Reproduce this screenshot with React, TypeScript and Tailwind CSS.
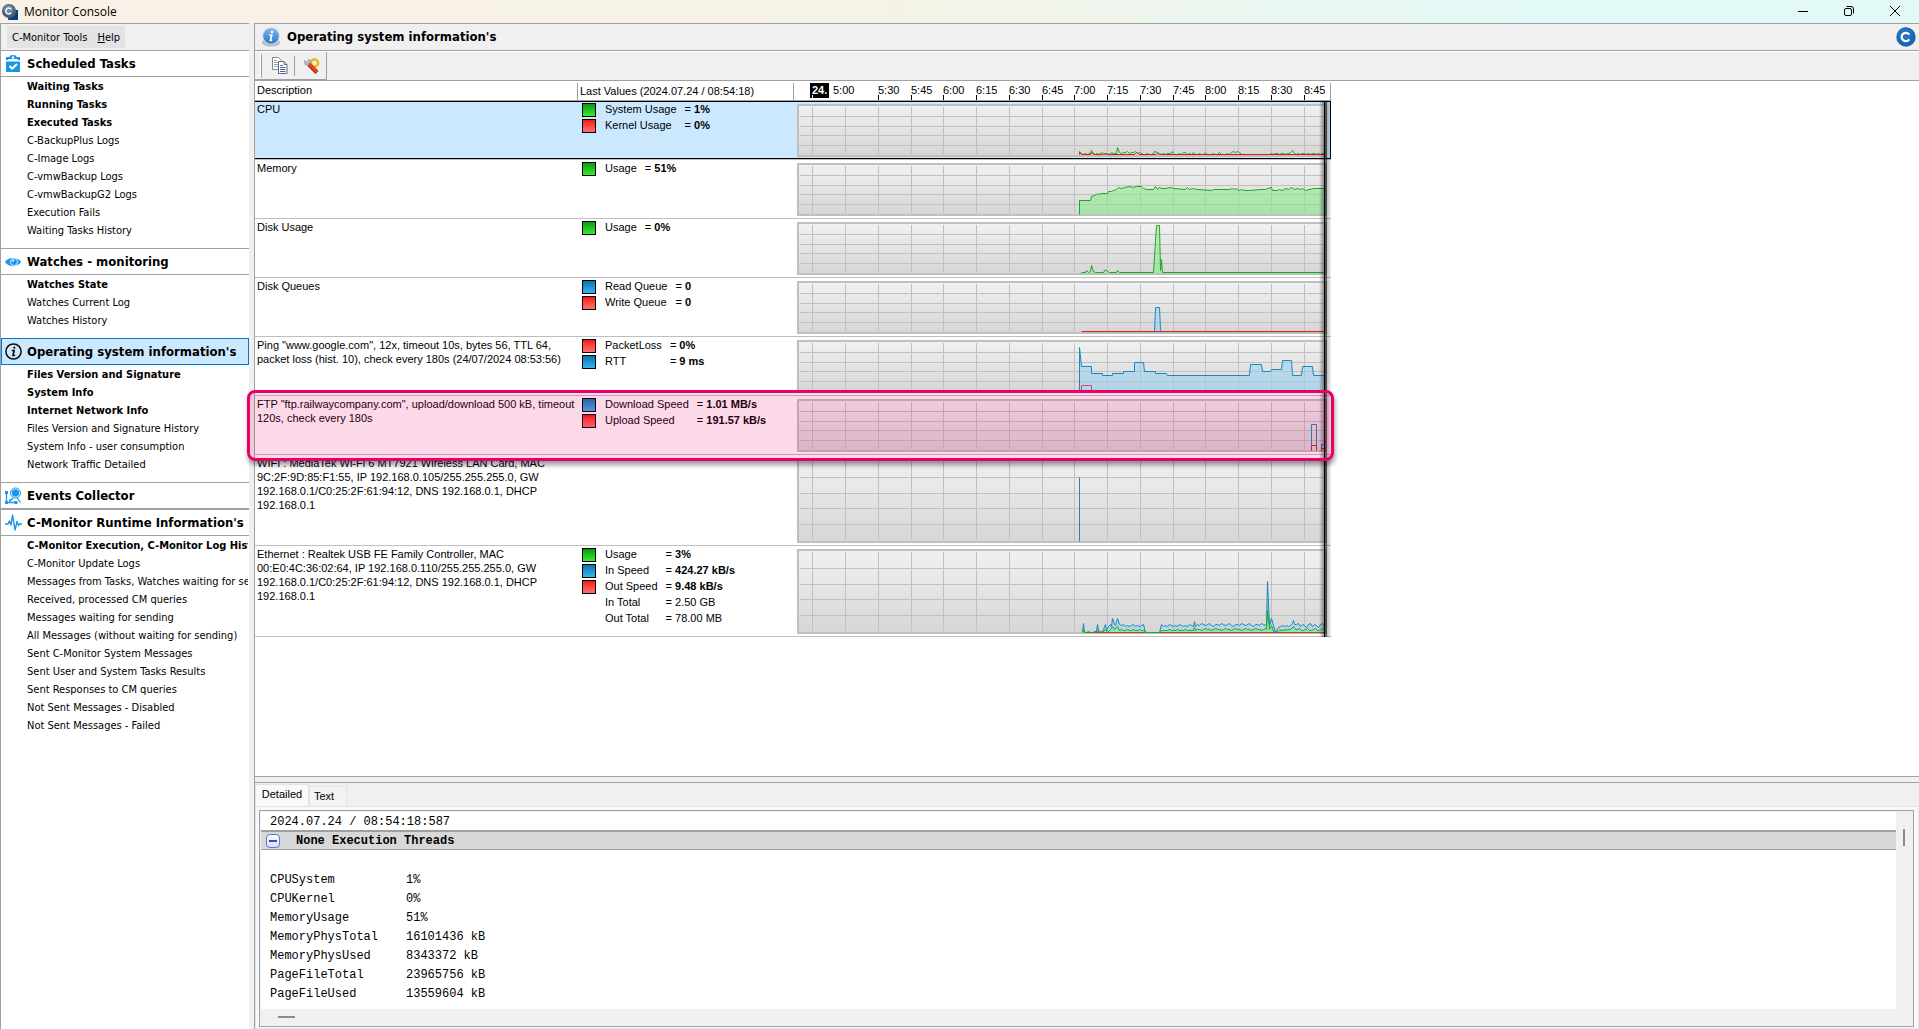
import { useState, type ReactNode } from "react";
import clsx from "clsx";

type Tone = "green" | "red" | "blue" | "none";

type Metric = { label: string; value: string; tone: Tone; plain?: boolean };

type Series = { points: string; stroke: string; fill?: string };

type Monitor = {
  id: string;
  description: string;
  metrics: Metric[];
  series: Series[];
  tall?: boolean;
  marked?: boolean;
};

type MenuGroup = {
  title: string;
  icon: ReactNode;
  strong: string[];
  items: string[];
};

const GREEN = "#1fa81f";
const RED = "#e8180c";
const BLUE = "#1c86bd";

// repeats a pattern of levels every two pixels
function wave(from: number, to: number, levels: number[]) {
  const out: string[] = [];
  for (let x = from, i = 0; x <= to; x += 2, i++) out.push(`${x},${levels[i % levels.length]}`);
  return out.join(" ");
}

const cpuLine = [
  "286,50 286,47 288,49",
  wave(290, 296, [50, 49]),
  "297,49 298,46 300,49",
  wave(302, 320, [50, 49, 50, 48, 49]),
  "323,49 324,43 326,48",
  wave(328, 346, [49, 48, 48, 47]),
  wave(348, 360, [49, 50, 50]),
  "361,47 364,48",
  wave(366, 374, [49, 50]),
  "377,49 379,47 380,50",
  wave(384, 400, [50, 49, 50, 48, 48]),
  wave(402, 436, [50, 50, 49, 50, 50, 48, 50]),
  wave(438, 446, [48, 47]),
  wave(448, 476, [50]),
  wave(478, 494, [49, 50, 49]),
  "496,49 498,47 499,46 501,49",
  wave(503, 531, [50, 49, 50, 49, 49])
].join(" ");

const memoryLine =
  "286,51 286,37 297,37 298,33 301,32 303,31 304,30 306,31 308,30 312,30 314,30 315,28 318,28 320,27 323,26 325,24 328,25 331,24 336,23 340,24 343,23 348,23 350,25 353,26 360,26 362,23 364,26 366,24 368,25 372,25 377,24 380,25 392,26 394,24 396,26 399,25 404,26 418,27 420,26 436,26 439,25 441,26 443,25 445,27 448,26 451,27 456,27 467,26 472,26 474,25 478,24 479,27 484,27 486,26 489,27 492,25 495,26 498,24 501,26 504,25 507,26 509,25 512,27 520,25 531,25";

const inSpeedLine = [
  "289,83 290,74 291,83",
  wave(293, 301, [83, 82, 83]),
  "303,82 304,75 305,81 307,82 309,83 310,80 312,75 313,81 315,77 317,75 318,77 319,69 321,75 322,76 324,69 326,75",
  wave(328, 350, [76, 75, 77, 76, 77]),
  "352,83 366,83 368,75",
  wave(370, 398, [77, 76, 77, 75, 76]),
  "400,77 401,72 402,77",
  wave(404, 472, [75, 76, 74, 75, 76, 75, 74, 76, 77, 75]),
  "473,74 474,32 476,76 478,69 480,76 482,83 485,78",
  wave(487, 497, [77, 76]),
  "499,74 500,71 501,75",
  wave(503, 531, [75, 74, 77, 75, 76, 78])
].join(" ");

const usageLine = [
  "289,83 290,80 291,83 303,83 304,81 306,83 310,82 312,80 314,83 317,80 319,77 321,80 324,77 326,81",
  wave(328, 350, [80, 81, 81]),
  "352,83 366,83 368,81",
  wave(370, 398, [81, 81, 81, 80]),
  "400,81 401,78 402,81",
  wave(404, 472, [80, 80, 81, 80, 79]),
  "473,80 474,61 476,80 478,76 480,82 483,83 486,81 497,80 500,77 502,80",
  wave(504, 531, [80, 79, 81, 81])
].join(" ");

const MONITORS: Monitor[] = [
  {
    id: "cpu",
    description: "CPU",
    metrics: [
      { label: "System Usage", value: "1%", tone: "green" },
      { label: "Kernel Usage", value: "0%", tone: "red" }
    ],
    series: [
      { points: cpuLine, stroke: GREEN },
      { points: "286,50 286,48 288,50 297,50 298,48 300,50 308,50 312,49 314,50 341,50 343,48 346,50 362,50 364,49 366,50 531,50", stroke: RED }
    ]
  },
  {
    id: "memory",
    description: "Memory",
    metrics: [{ label: "Usage", value: "51%", tone: "green" }],
    series: [{ points: memoryLine, stroke: GREEN, fill: "#7fee7f" }]
  },
  {
    id: "disk-usage",
    description: "Disk Usage",
    metrics: [{ label: "Usage", value: "0%", tone: "green" }],
    series: [
      {
        points: "288,50 292,50 293,48 295,50 297,49 298,43 300,49 302,50 310,50 312,47 314,49 316,50 323,50 324,48 326,50 360,50 363,3 366,3 367,48 368,37 369,50 531,50",
        stroke: GREEN,
        fill: "#7fee7f"
      }
    ]
  },
  {
    id: "disk-queues",
    description: "Disk Queues",
    metrics: [
      { label: "Read Queue", value: "0", tone: "blue" },
      { label: "Write Queue", value: "0", tone: "red" }
    ],
    series: [
      { points: "361,50 362,26 366,26 367,48 368,50", stroke: BLUE, fill: "#8fd2f5" },
      { points: "288,50 531,50", stroke: RED }
    ]
  },
  {
    id: "ping",
    description: 'Ping "www.google.com", 12x, timeout 10s, bytes 56, TTL 64,\npacket loss (hist. 10), check every 180s (24/07/2024 08:53:56)',
    metrics: [
      { label: "PacketLoss", value: "0%", tone: "red" },
      { label: "RTT", value: "9 ms", tone: "blue" }
    ],
    series: [
      {
        points:
          "286,51 286,7 288,26 298,26 298,33 309,33 309,35 319,35 319,33 330,33 330,31 341,31 341,22 350,22 351,31 362,31 362,33 373,33 374,35 456,35 457,24 468,24 469,31 477,31 478,29 488,29 489,20 498,20 499,35 508,35 509,26 519,26 520,35 531,35",
        stroke: BLUE,
        fill: "#8fd2f5"
      },
      { points: "288,51 288,45 298,45 298,51", stroke: "#d8485c" }
    ]
  },
  {
    id: "ftp",
    description: 'FTP "ftp.railwaycompany.com", upload/download 500 kB, timeout\n120s, check every 180s',
    metrics: [
      { label: "Download Speed", value: "1.01 MB/s", tone: "blue" },
      { label: "Upload Speed", value: "191.57 kB/s", tone: "red" }
    ],
    series: [
      { points: "518,51 518,25 523,25 523,51", stroke: BLUE },
      { points: "528,51 528,45 531,45", stroke: BLUE },
      { points: "518,51 518,46 523,46 523,51", stroke: RED },
      { points: "528,51 528,49 531,49", stroke: RED }
    ],
    marked: true
  },
  {
    id: "wifi",
    description: "WIFI : MediaTek Wi-Fi 6 MT7921 Wireless LAN Card, MAC\n9C:2F:9D:85:F1:55, IP 192.168.0.105/255.255.255.0, GW\n192.168.0.1/C0:25:2F:61:94:12, DNS 192.168.0.1, DHCP\n192.168.0.1",
    metrics: [],
    series: [{ points: "286,83 286,19", stroke: BLUE }],
    tall: true
  },
  {
    id: "ethernet",
    description: "Ethernet : Realtek USB FE Family Controller, MAC\n00:E0:4C:36:02:64, IP 192.168.0.110/255.255.255.0, GW\n192.168.0.1/C0:25:2F:61:94:12, DNS 192.168.0.1, DHCP\n192.168.0.1",
    metrics: [
      { label: "Usage", value: "3%", tone: "green" },
      { label: "In Speed", value: "424.27 kB/s", tone: "blue" },
      { label: "Out Speed", value: "9.48 kB/s", tone: "red" },
      { label: "In Total", value: "2.50 GB", tone: "none", plain: true },
      { label: "Out Total", value: "78.00 MB", tone: "none", plain: true }
    ],
    series: [
      { points: inSpeedLine, stroke: BLUE, fill: "#8fd2f5" },
      { points: usageLine, stroke: GREEN, fill: "#7fee7f" },
      { points: "298,83 351,83", stroke: "#b8442c" },
      { points: "351,83 366,83", stroke: GREEN },
      { points: "366,83 531,83", stroke: "#b8442c" }
    ],
    tall: true
  }
];

const TICKS: [number, string][] = [
  [85, "5:30"], [118, "5:45"], [150, "6:00"], [183, "6:15"], [216, "6:30"], [249, "6:45"], [281, "7:00"],
  [314, "7:15"], [347, "7:30"], [380, "7:45"], [412, "8:00"], [445, "8:15"], [478, "8:30"], [511, "8:45"]
];
const GRID_X = [19, 52, ...TICKS.map(([x]) => x)];

const GROUPS: MenuGroup[] = [
  {
    title: "Scheduled Tasks",
    icon: <ClipboardIcon />,
    strong: ["Waiting Tasks", "Running Tasks", "Executed Tasks"],
    items: ["C-BackupPlus Logs", "C-Image Logs", "C-vmwBackup Logs", "C-vmwBackupG2 Logs", "Execution Fails", "Waiting Tasks History"]
  },
  {
    title: "Watches - monitoring",
    icon: <EyeIcon />,
    strong: ["Watches State"],
    items: ["Watches Current Log", "Watches History"]
  },
  {
    title: "Operating system information's",
    icon: <InfoIcon />,
    strong: ["Files Version and Signature", "System Info", "Internet Network Info"],
    items: ["Files Version and Signature History", "System Info - user consumption", "Network Traffic Detailed"]
  },
  { title: "Events Collector", icon: <EventsIcon />, strong: [], items: [] },
  {
    title: "C-Monitor Runtime Information's",
    icon: <PulseIcon />,
    strong: ["C-Monitor Execution, C-Monitor Log History"],
    items: [
      "C-Monitor Update Logs",
      "Messages from Tasks, Watches waiting for sending",
      "Received, processed CM queries",
      "Messages waiting for sending",
      "All Messages (without waiting for sending)",
      "Sent C-Monitor System Messages",
      "Sent User and System Tasks Results",
      "Sent Responses to CM queries",
      "Not Sent Messages - Disabled",
      "Not Sent Messages - Failed"
    ]
  }
];

const DETAILS = [
  ["CPUSystem", "1%"],
  ["CPUKernel", "0%"],
  ["MemoryUsage", "51%"],
  ["MemoryPhysTotal", "16101436 kB"],
  ["MemoryPhysUsed", "8343372 kB"],
  ["PageFileTotal", "23965756 kB"],
  ["PageFileUsed", "13559604 kB"]
];

function ClipboardIcon() {
  return (
    <svg width="16" height="18" viewBox="0 0 16 18" aria-hidden="true">
      <path d="M1 2h3.500a3.500 2 0 0 1 7 0H15v3H1z" fill="#1796ea" />
      <circle cx="8" cy="2.500" r="1.200" fill="#fff" />
      <path d="M3.500 4.500h9" stroke="#fff" />
      <path d="M1 6.500h14V17H1z" fill="#1796ea" />
      <path d="M4.500 11l2.700 2.700L12 9" fill="none" stroke="#fff" strokeWidth="2" />
    </svg>
  );
}

function EyeIcon() {
  return (
    <svg width="16" height="12" viewBox="0 0 16 12" aria-hidden="true">
      <path d="M0 6C3 .5 13 .5 16 6 13 11.500 3 11.500 0 6z" fill="#1796ea" />
      <circle cx="9" cy="6" r="3.700" fill="#fff" />
      <circle cx="9" cy="6" r="2.900" fill="#1796ea" />
      <path d="M9 5.500V3.400A2.600 2.600 0 0 0 6.800 5.500z" fill="#fff" />
    </svg>
  );
}

function InfoIcon() {
  return (
    <svg width="17" height="17" viewBox="0 0 17 17" fill="none" stroke="#111" aria-hidden="true">
      <circle cx="8.500" cy="8.500" r="7.600" strokeWidth="1.500" />
      <circle cx="9.300" cy="4.700" r="1.100" fill="#111" stroke="none" />
      <path d="M6.700 7.500h2.400L8 12.500h2.200" strokeWidth="1.700" />
    </svg>
  );
}

function EventsIcon() {
  return (
    <svg width="17" height="17" viewBox="0 0 17 17" fill="none" stroke="#1796ea" aria-hidden="true">
      <path d="M1.500 5v10M2 15.500h10M5 14l3-3M12 10.500l3.500 5" strokeWidth="1.300" />
      <circle cx="10.500" cy="6" r="5" strokeWidth="1" />
      <circle cx="10.500" cy="6" r="3.700" fill="#1796ea" stroke="none" />
      <path d="M0 4h3v3H0zM0 14h3v3H0zM9.500 14h3v3h-3zM4 12.500h2v2H4z" fill="#1796ea" stroke="none" />
    </svg>
  );
}

function PulseIcon() {
  return (
    <svg width="17" height="17" viewBox="0 0 17 17" fill="none" stroke="#1796ea" strokeWidth="1.400" strokeLinejoin="round" aria-hidden="true">
      <path d="M0 10h3l1.500-3 1.500 4L7.500 1l2.500 15 2-8.500 1.500 4 1-1.500H17" />
    </svg>
  );
}

function AppIcon() {
  return (
    <svg width="16" height="16" viewBox="0 0 16 16" className="shrink-0" aria-hidden="true">
      <path d="M7 6h9v10H6z" fill="#0a3f86" />
      <circle cx="7" cy="7" r="7" fill="#4a6079" />
      <circle cx="6.500" cy="5.500" r="4.800" fill="#6e859d" />
      <path d="M9.200 5.200A3 3 0 1 0 9.200 8.800" fill="none" stroke="#fff" strokeWidth="1.500" />
    </svg>
  );
}

function InfoBall() {
  return (
    <svg width="20" height="20" viewBox="0 0 20 20" aria-hidden="true">
      <defs>
        <linearGradient id="ball" x1="0" y1="0" x2="0" y2="1">
          <stop offset="0" stopColor="#7fb9ee" />
          <stop offset="1" stopColor="#2a74cb" />
        </linearGradient>
      </defs>
      <ellipse cx="10" cy="15.500" rx="9" ry="4" fill="#b4b6ba" />
      <circle cx="10" cy="9" r="9" fill="#d9dbe0" />
      <circle cx="10" cy="9" r="7.800" fill="url(#ball)" />
      <circle cx="11" cy="5" r="1.300" fill="#fff" />
      <path d="M8.300 8h2.400l-1.200 5.300h1.700" fill="none" stroke="#fff" strokeWidth="1.700" />
    </svg>
  );
}

function BrandBall() {
  return (
    <svg width="20" height="20" viewBox="0 0 20 20" aria-hidden="true">
      <circle cx="10" cy="10" r="9.700" fill="#1667b5" />
      <circle cx="9" cy="7.500" r="7" fill="#2473c2" />
      <path d="M13.300 7.600A4.200 4.200 0 1 0 13.300 12.400" fill="none" stroke="#fff" strokeWidth="2.200" />
    </svg>
  );
}

function CopyIcon() {
  return (
    <svg width="16" height="17" viewBox="0 0 16 17" aria-hidden="true">
      <path d="M.5.5h6l3 3v9h-9z" fill="#fff" stroke="#8a8a8a" />
      <path d="M2 3.500h3M2 5.500h4M2 7.500h4M2 9.500h4" stroke="#8fa6cc" />
      <path d="M6.500 4.500h5.500l3 3v9H6.500z" fill="#fff" stroke="#6c6c6c" />
      <path d="M12 4.500v3h3" fill="none" stroke="#6c6c6c" />
      <path d="M8 8.500h3M8 10.500h5.500M8 12.500h5.500M8 14.500h5.500" stroke="#3e67b0" />
    </svg>
  );
}

function ToolsIcon() {
  return (
    <svg width="17" height="16" viewBox="0 0 17 16" fill="none" aria-hidden="true">
      <circle cx="11.500" cy="5" r="3.600" stroke="#f5b81c" strokeWidth="2.600" />
      <path d="M1 2l2 2 2-.5L5.500 1 8 3l-.5 3.500L5.500 8 2 6.500z" fill="#b9bcc0" stroke="#8d9094" strokeWidth=".6" />
      <path d="M6 6.500l8 8" stroke="#a31208" strokeWidth="4" />
      <path d="M6 6l8 8" stroke="#ef4426" strokeWidth="2.600" />
    </svg>
  );
}

function Swatch({ tone }: { tone: Tone }) {
  if (tone === "none") return <span className="h-3.5" />;
  return (
    <span
      className={clsx(
        "h-3.5 w-3.5 border border-black bg-linear-to-b",
        tone === "green" && "from-[#0a9a0a] to-[#33ee33]",
        tone === "red" && "from-[#fb0505] to-[#ff6b6b]",
        tone === "blue" && "from-[#0874ac] to-[#36b4f4]"
      )}
    />
  );
}

function Chart({ series, tall }: { series: Series[]; tall?: boolean }) {
  const height = tall ? 85 : 53;
  const lines = tall ? [19, 35, 50, 66] : [12, 22, 31, 41];
  return (
    <svg width="538" height={height} viewBox={`0 0 538 ${height}`} className="block" aria-hidden="true">
      <defs>
        <linearGradient id={`plot${height}`} x1="0" y1="0" x2="0" y2="1">
          <stop offset="0" stopColor="#f1f1f1" />
          <stop offset="1" stopColor="#d6d6d6" />
        </linearGradient>
      </defs>
      <rect x="5" y="1" width="528" height={height - 2} fill={`url(#plot${height})`} stroke="#bfbfbf" strokeWidth="2" />
      <g stroke="#c0c0c0" shapeRendering="crispEdges">
        {lines.map((y) => <line key={y} x1="7" x2="531" y1={y + 0.5} y2={y + 0.5} />)}
        {GRID_X.map((x) => <line key={x} x1={x + 0.5} x2={x + 0.5} y1="3" y2={height - 3} />)}
      </g>
      {series.map((item) => (
        <g key={item.points} transform="translate(.5 .5)">
          {item.fill ? <polygon points={`${item.points} 531,${height - 2} ${item.points.split(",")[0]},${height - 2}`} fill={item.fill} fillOpacity=".5" /> : null}
          <polyline points={item.points} fill="none" stroke={item.stroke} />
        </g>
      ))}
    </svg>
  );
}

function TimeAxis() {
  return (
    <svg width="538" height="19" viewBox="0 0 538 19" className="block font-['Liberation_Sans',Arial,sans-serif] text-[11px] font-normal">
      <rect x="17" y="2" width="19" height="15" />
      <text x="19" y="13" fill="#fff" fontWeight="bold">24.</text>
      <path d="M19.500 14v5" stroke="#fff" />
      <text x="40" y="13">5:00</text>
      {TICKS.map(([x, label]) => (
        <g key={label}>
          <text x={x} y="13">{label}</text>
          <path d={`M${x + 0.5} 14v5`} stroke="#000" />
        </g>
      ))}
      <path d="M.5 2v17M537.500 2v17" stroke="#a0a0a0" />
    </svg>
  );
}

function MonitorRow({ monitor, selected, onSelect }: { monitor: Monitor; selected: boolean; onSelect: () => void }) {
  const cell = clsx(
    "border-y",
    monitor.tall ? "h-[90px]" : "h-[58px]",
    selected ? "border-black bg-[#cce8ff]" : "border-transparent"
  );
  return (
    <tr onClick={onSelect} className="align-top">
      <td className="relative border-b border-[#bfbfbf] p-0">
        <div className={clsx(cell, "pl-0.5 leading-[14px] whitespace-pre")}>{monitor.description}</div>
        {monitor.marked ? (
          <div className="pointer-events-none absolute -top-1.5 -left-2 z-20 h-[71px] w-[1087px] rounded-lg border-3 border-[#e6006a] bg-[#e6006a]/15 shadow-[1px_4px_5px_rgba(0,0,0,0.4)]" />
        ) : null}
      </td>
      <td className="border-b border-[#bfbfbf] p-0">
        <div className={cell}>
          <div className="grid grid-cols-[15px_max-content_max-content] gap-x-2 gap-y-0.5 pt-px pl-[5px] leading-3">
            {monitor.metrics.map((metric) => (
              <div key={metric.label} className="contents">
                <Swatch tone={metric.tone} />
                <span>{metric.label}</span>
                <span>= {metric.plain ? metric.value : <b>{metric.value}</b>}</span>
              </div>
            ))}
          </div>
        </div>
      </td>
      <td className="border-b border-[#bfbfbf] p-0">
        <div className={clsx(cell, "pt-0.5", selected && "border-r")}>
          <Chart series={monitor.series} tall={monitor.tall} />
        </div>
      </td>
    </tr>
  );
}

function Sidebar() {
  const [active, setActive] = useState("Operating system information's");
  return (
    <aside className="flex w-[249px] shrink-0 flex-col overflow-hidden border-t border-l border-[#a0a0a0] bg-white">
      <div className="flex h-[27px] shrink-0 items-center border-b border-[#a0a0a0] bg-[#f0f0f0] pl-1.5">
        <div className="flex h-[22px] items-center gap-2.5 bg-[#e3e3e3] px-[5px] pt-0.5">
          <button type="button">C-Monitor Tools</button>
          <button type="button"><u>H</u>elp</button>
        </div>
      </div>
      <nav>
        {GROUPS.map((group, index) => {
          const isActive = group.title === active;
          const hasItems = group.strong.length + group.items.length > 0;
          return (
            <section key={group.title} className={clsx(hasItems && index < 4 && "pb-2")}>
              <button
                type="button"
                onClick={() => setActive(group.title)}
                className={clsx(
                  "flex w-full items-center text-left text-[13px] font-bold whitespace-nowrap",
                  isActive ? "h-[27px] border border-[#0078d7] bg-[#cce8ff]" : "border-b border-[#a0a0a0]",
                  !isActive && (index === 0 ? "h-[26px]" : "h-[27px] border-t")
                )}
              >
                <span className={clsx("flex shrink-0", isActive ? "w-[25px] pl-[3px]" : "w-[26px] pl-1")}>{group.icon}</span>
                {group.title}
              </button>
              {hasItems ? (
                <ul className="mr-px overflow-hidden pt-px pl-[26px] leading-[18px] whitespace-nowrap">
                  {group.strong.map((label) => (
                    <li key={label}><button type="button" className="font-bold">{label}</button></li>
                  ))}
                  {group.items.map((label) => (
                    <li key={label}><button type="button">{label}</button></li>
                  ))}
                </ul>
              ) : null}
            </section>
          );
        })}
      </nav>
    </aside>
  );
}

function DetailPane() {
  const [tab, setTab] = useState("Detailed");
  return (
    <section className="shrink-0 border-t border-[#a0a0a0] bg-[#f0f0f0] font-['Liberation_Sans',Arial,sans-serif]">
      <div className="mt-[5px] border-t border-[#a0a0a0] pt-px">
        <div role="tablist" className="flex h-[22px] items-end">
          {["Detailed", "Text"].map((name) => (
            <button
              key={name}
              type="button"
              role="tab"
              aria-selected={tab === name}
              onClick={() => setTab(name)}
              className={clsx(
                "border border-b-0 border-[#e4e4e4]",
                tab === name ? "h-[22px] w-[54px] bg-[#f9f9f9] pb-0.5" : "h-5 w-[38px] bg-[#f3f3f3] pr-2"
              )}
            >
              {name}
            </button>
          ))}
        </div>
        <div className="border border-[#e4e4e4] bg-[#f9f9f9] pt-[3px] pr-1 pb-px pl-[3px]">
          <div className="flex border border-[#a0a0a8] bg-[#f0f0f0] p-px font-['Liberation_Mono','Courier_New',monospace] text-xs">
            <div className="min-w-0 flex-1">
              <div className="bg-white pb-1.5">
                <p className="h-[18px] pl-[9px] leading-5">2024.07.24 / 08:54:18:587</p>
                <div className="flex h-5 items-center border-t-2 border-b border-[#a0a0a0] bg-[#d8d8d8] pl-[5px] font-bold">
                  <button type="button" aria-label="Collapse" className="flex h-3.5 w-3.5 items-center justify-center rounded-sm border border-[#5a78d8] bg-linear-to-b from-white to-[#d8e0f4]">
                    <span className="h-0.5 w-2 bg-[#2f50c8]" />
                  </button>
                  <span className="pl-4">None Execution Threads</span>
                </div>
                <table className="mt-5 border-spacing-0 text-left">
                  <tbody>
                    {DETAILS.map(([name, value]) => (
                      <tr key={name} className="h-[19px]">
                        <th scope="row" className="w-[145px] p-0 pl-[9px] font-normal">{name}</th>
                        <td className="p-0">{value}</td>
                      </tr>
                    ))}
                  </tbody>
                </table>
              </div>
              <div className="flex h-4 items-center pl-[17px]"><span className="h-0.5 w-[17px] bg-[#8a8a8a]" /></div>
            </div>
            <div className="flex w-4 justify-center pt-[17px]"><span className="h-[17px] w-0.5 bg-[#8a8a8a]" /></div>
          </div>
        </div>
      </div>
    </section>
  );
}

export default function App() {
  const [selected, setSelected] = useState("cpu");

  return (
    <div className="flex h-screen flex-col overflow-hidden bg-[#f0f0f0] font-['DejaVu_Sans_Condensed','DejaVu_Sans',Tahoma,sans-serif] text-[11px] text-black">
      <header className="flex h-[23px] shrink-0 items-center gap-1.5 bg-linear-to-r from-[#faf1e6] via-[#f5f2e6] via-45% to-[#e3f9f7] to-80% pl-0.5 font-['Open_Sans',sans-serif] text-xs">
        <AppIcon />
        <h1 className="flex-1">Monitor Console</h1>
        <div className="flex items-center gap-9 pr-[19px] pb-0.5">
          <button type="button" aria-label="Minimize">
            <svg width="10" height="10" viewBox="0 0 10 10"><path d="M0 5.500h10" stroke="#000" /></svg>
          </button>
          <button type="button" aria-label="Restore">
            <svg width="10" height="10" viewBox="0 0 10 10" fill="none" stroke="#000">
              <rect x=".5" y="2.500" width="7" height="7" rx="1.500" />
              <path d="M2.500.5H7A2.500 2.500 0 0 1 9.500 3v4.500" />
            </svg>
          </button>
          <button type="button" aria-label="Close">
            <svg width="10" height="10" viewBox="0 0 10 10"><path d="M0 0l10 10M10 0L0 10" stroke="#000" /></svg>
          </button>
        </div>
      </header>

      <div className="flex min-h-0 flex-1 gap-[5px]">
        <Sidebar />
        <main className="flex min-w-0 flex-1 flex-col border-t border-l border-[#a0a0a0]">
          <div className="flex h-[27px] shrink-0 items-center gap-1.5 border-b border-[#a0a0a0] pr-[3px] pl-1.5">
            <InfoBall />
            <h2 className="flex-1 text-[13px] font-bold">Operating system information's</h2>
            <BrandBall />
          </div>
          <div className="flex h-[30px] shrink-0 border-t border-b border-t-white border-b-[#a0a0a0]">
            <div className="flex h-[28px] items-center border-r border-b border-[#a0a0a0] pr-1.5 pl-[5px]">
              <span className="h-6 w-0.5 border-r border-l border-r-[#a0a0a0] border-l-white" />
              <button type="button" aria-label="Copy" className="pr-1.5 pl-2.5"><CopyIcon /></button>
              <span className="h-5 w-px bg-[#a0a0a0]" />
              <button type="button" aria-label="Settings" className="pl-2"><ToolsIcon /></button>
            </div>
          </div>

          <div className="min-h-0 flex-1 bg-white font-['Liberation_Sans',Arial,sans-serif]">
            <div className="relative w-[1076px]">
              <table className="w-full table-fixed border-separate border-spacing-0 text-left">
                <thead>
                  <tr className="h-5">
                    <th className="w-[322px] border-b border-[#a0a0a0] p-0 pl-0.5 font-normal">Description</th>
                    <th className="w-[216px] border-b border-[#a0a0a0] p-0 font-normal">
                      <div className="mt-0.5 border-l border-[#a0a0a0] pl-0.5">Last Values (2024.07.24 / 08:54:18)</div>
                    </th>
                    <th aria-label="History" className="w-[538px] border-b border-[#a0a0a0] p-0"><TimeAxis /></th>
                  </tr>
                </thead>
                <tbody>
                  {MONITORS.map((monitor) => (
                    <MonitorRow
                      key={monitor.id}
                      monitor={monitor}
                      selected={selected === monitor.id}
                      onSelect={() => setSelected(monitor.id)}
                    />
                  ))}
                </tbody>
              </table>
              <div className="pointer-events-none absolute top-5 right-0 bottom-0 z-10 flex w-3">
                <span className="w-[5px] bg-linear-to-r from-black/0 to-black/40" />
                <span className="w-px bg-black" />
                <span className="w-0.5 bg-black/60" />
                <span className="w-1 bg-linear-to-r from-black/25 to-black/5" />
              </div>
            </div>
          </div>

          <DetailPane />
        </main>
      </div>
    </div>
  );
}
